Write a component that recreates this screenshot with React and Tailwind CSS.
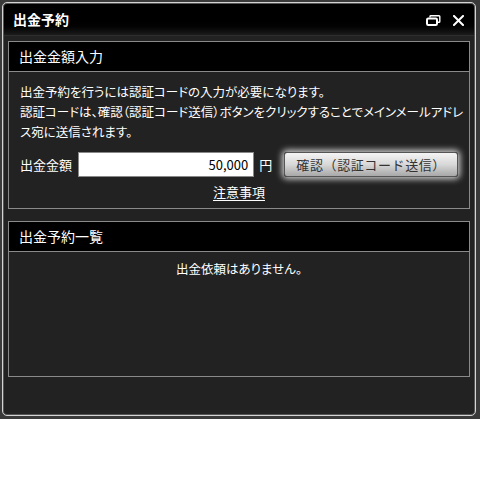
const FONT = { fontFamily: '"Meiryo", "Noto Sans CJK JP", sans-serif' }

function RestoreIcon() {
  return (
    <svg width="15" height="11" viewBox="0 0 15 11" fill="none">
      <path d="M4 2.5 V1.5 Q4 0.8 4.8 0.8 H13 Q13.8 0.8 13.8 1.6 V6.5 Q13.8 7.3 13 7.3 H12" stroke="white" strokeWidth="1.4" />
      <rect x="1" y="3.5" width="10" height="6.5" rx="1.3" stroke="white" strokeWidth="2" />
    </svg>
  )
}

function CloseIcon() {
  return (
    <svg width="11" height="11" viewBox="0 0 11 11">
      <path d="M1 1 L10 10 M10 1 L1 10" stroke="white" strokeWidth="2" strokeLinecap="square" />
    </svg>
  )
}

function Section({ title, children, className }) {
  return (
    <div className={`mx-[5px] border border-[#8a8a8a] ${className}`}>
      <div className="h-[30px] bg-black border-b border-[#8a8a8a] flex items-center pl-[10px] text-white text-[14px]">
        {title}
      </div>
      {children}
    </div>
  )
}

export default function App() {
  return (
    <div className="w-[480px] h-[480px] bg-white" style={FONT}>
      <div className="h-[419px] bg-[#3a3a3a] pl-[2px] pr-[4px] pt-[2px] pb-[3px]">
        <div className="h-full rounded-[5px] border border-[#d4d4d4] bg-[#222] shadow-[inset_0_0_0_1px_#555] flex flex-col overflow-hidden">
          {/* title bar */}
          <div className="h-[32px] shrink-0 bg-gradient-to-b from-black via-black to-[#1c1c1c] border-b border-[#2e2e2e] mx-[1px] mt-[1px] rounded-t-[4px] flex items-center pl-[9px] pr-[10px]">
            <span className="text-white text-[14px] font-bold flex-1">出金予約</span>
            <div className="flex items-center gap-[12px] pt-[2px]">
              <RestoreIcon />
              <CloseIcon />
            </div>
          </div>

          <Section title="出金金額入力" className="mt-[5px]">
            <div className="px-[11px] pt-[10px] pb-[6px] text-white text-[12.5px]">
              <p className="leading-[20px] whitespace-nowrap" style={{ fontFeatureSettings: '"palt"' }}>
                出金予約を行うには認証コードの入力が必要になります。<br />
                認証コードは、確認（認証コード送信）ボタンをクリックすることでメインメールアドレ<br />
                ス宛に送信されます。
              </p>
              <div className="flex items-center mt-[10px]">
                <span className="text-[13px] w-[58px]">出金金額</span>
                <div className="w-[178px] h-[25px] bg-white border border-[#888] flex items-center justify-end pr-[5px] text-black text-[13px]">
                  50,000
                </div>
                <span className="ml-[5px] text-[13px]">円</span>
                <button className="ml-[12px] w-[175px] h-[25px] rounded-[3px] border border-[#555] bg-gradient-to-b from-[#f4f4f4] via-[#d8d8d8] to-[#a8a8a8] text-[#333] text-[13px] tracking-[0.6px] shadow-[0_0_6px_2px_rgba(255,255,255,0.8)]">
                  確認（認証コード送信）
                </button>
              </div>
              <div className="text-center mt-[5px] leading-[20px]">
                <span className="underline underline-offset-[3px] text-[13px]">注意事項</span>
              </div>
            </div>
          </Section>

          <Section title="出金予約一覧" className="mt-[12px] h-[156px]">
            <div className="text-center text-white text-[12.5px] pt-[7px] leading-[20px]" style={{ fontFeatureSettings: '"palt"' }}>
              出金依頼はありません。
            </div>
          </Section>
        </div>
      </div>
    </div>
  )
}
